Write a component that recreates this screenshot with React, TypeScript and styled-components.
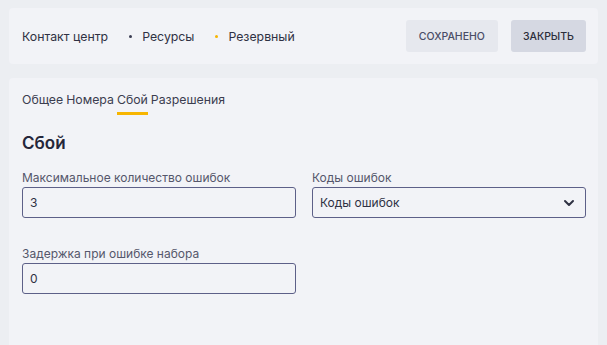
import styled, { createGlobalStyle } from 'styled-components';
import { FiChevronDown } from 'react-icons/fi';

const GlobalStyle = createGlobalStyle`
  html, body {
    margin: 0;
    padding: 0;
    background: #eceef2;
    font-family: Inter, "Noto Sans", sans-serif;
    color: #2b2d3a;
  }
`;

const Page = styled.div`
  display: flex;
  flex-direction: column;
  gap: 14px;
  padding: 8px 9px 0 9px;
  height: 345px;
  box-sizing: border-box;
`;

const Card = styled.div`
  background: #f2f3f7;
  border-radius: 4px;
`;

const Header = styled(Card)`
  display: flex;
  align-items: center;
  justify-content: space-between;
  height: 56px;
  padding: 0 12px 0 13px;
  box-sizing: border-box;
`;

const Crumbs = styled.div`
  display: flex;
  align-items: center;
  font-size: 12.3px;
  color: #2f3143;
`;

const Dot = styled.span<{ $color: string }>`
  width: 3px;
  height: 3px;
  border-radius: 50%;
  background: ${(p) => p.$color};
  margin: 0 10px 0 21px;
`;

const Actions = styled.div`
  display: flex;
  gap: 13px;
`;

const Button = styled.button<{ $primary?: boolean }>`
  height: 32px;
  padding: 0 ${(p) => (p.$primary ? '12px' : '13px')};
  border: none;
  border-radius: 3px;
  background: ${(p) => (p.$primary ? '#d5d8e2' : '#e6e8ee')};
  color: ${(p) => (p.$primary ? '#2b2d3a' : '#4a4d66')};
  font-family: inherit;
  font-size: 10.5px;
  font-weight: 500;
  text-transform: uppercase;
`;

const Body = styled(Card)`
  flex: 1;
  padding: 14px 12px 0 13px;
  border-radius: 4px 4px 0 0;
`;

const Tabs = styled.div`
  display: flex;
  gap: 3px;
`;

const Tab = styled.div<{ $active?: boolean }>`
  position: relative;
  font-size: 12.3px;
  color: #3b3d4f;
  padding-bottom: 8px;
  &::after {
    content: '';
    display: ${(p) => (p.$active ? 'block' : 'none')};
    position: absolute;
    left: 0;
    right: 0;
    bottom: 0;
    height: 3px;
    background: #f7b500;
  }
`;

const Title = styled.h2`
  margin: 18px 0 17px;
  font-size: 17px;
  font-weight: 600;
  color: #24263a;
`;

const Grid = styled.div`
  display: grid;
  grid-template-columns: 274px 274px;
  column-gap: 16px;
  row-gap: 28px;
`;

const Field = styled.div`
  display: flex;
  flex-direction: column;
  gap: 2px;
`;

const Label = styled.label`
  font-size: 12px;
  color: #55576b;
`;

const Input = styled.div`
  display: flex;
  align-items: center;
  justify-content: space-between;
  height: 31px;
  box-sizing: border-box;
  border: 1px solid #5d6088;
  border-radius: 3px;
  padding: 0 8px 0 7px;
  font-size: 12px;
  color: #2f3143;
  background: #f2f3f7;
`;

export default function App() {
  return (
    <>
      <GlobalStyle />
      <Page>
        <Header>
          <Crumbs>
            <span>Контакт центр</span>
            <Dot $color="#3a3c52" />
            <span>Ресурсы</span>
            <Dot $color="#f7b500" />
            <span>Резервный</span>
          </Crumbs>
          <Actions>
            <Button>Сохранено</Button>
            <Button $primary>Закрыть</Button>
          </Actions>
        </Header>
        <Body>
          <Tabs>
            <Tab>Общее</Tab>
            <Tab>Номера</Tab>
            <Tab $active>Сбой</Tab>
            <Tab>Разрешения</Tab>
          </Tabs>
          <Title>Сбой</Title>
          <Grid>
            <Field>
              <Label>Максимальное количество ошибок</Label>
              <Input>3</Input>
            </Field>
            <Field>
              <Label>Коды ошибок</Label>
              <Input>
                Коды ошибок
                <FiChevronDown size={16} strokeWidth={3} />
              </Input>
            </Field>
            <Field>
              <Label>Задержка при ошибке набора</Label>
              <Input>0</Input>
            </Field>
          </Grid>
        </Body>
      </Page>
    </>
  );
}
